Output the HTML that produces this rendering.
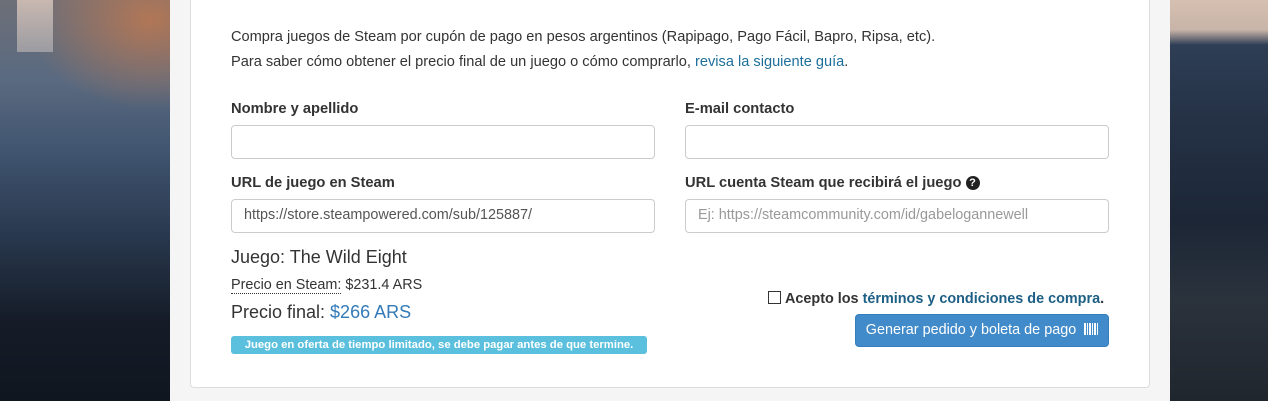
<!DOCTYPE html>
<html><head><meta charset="utf-8"><style>
*{box-sizing:border-box}
body{margin:0;width:1268px;height:401px;overflow:hidden;position:relative;font-family:"Liberation Sans",Arial,sans-serif;color:#333;background:#1a2230}
.bgl{position:absolute;left:0;top:0;width:170px;height:401px;background:
radial-gradient(ellipse 120px 90px at 150px 20px,rgba(190,120,80,.85),rgba(190,120,80,0)),
linear-gradient(180deg,#6d6f78 0px,#5a6a80 80px,#415570 150px,#2a3a50 230px,#151c28 320px,#10161f 401px)}
.bgl:before{content:"";position:absolute;left:17px;top:0;width:36px;height:52px;background:linear-gradient(180deg,#c8b8b0,#9c9ca2)}
.bgr{position:absolute;left:1170px;top:0;width:98px;height:401px;background:linear-gradient(180deg,#d5c0b0 0,#c8b4a8 30px,#2e3e55 45px,#253246 120px,#1c2636 220px,#2a323c 300px,#20262e 401px)}
.wrap{position:absolute;left:170px;top:0;width:1000px;height:401px;background:#f5f5f5}
.panel{position:absolute;left:20px;top:-10px;width:960px;height:398px;background:#fff;border:1px solid #ddd;border-radius:4px}
.p{position:absolute;font-size:14.6px;line-height:20px;white-space:nowrap}
label{position:absolute;font-weight:bold;font-size:14.7px;white-space:nowrap}
.in{position:absolute;height:34px;border:1px solid #ccc;border-radius:4px;background:#fff;font-size:14.4px;padding:7px 12px;color:#555;white-space:nowrap}
a{color:#1d5f85;text-decoration:none}
</style></head><body>
<div class="bgl"></div><div class="bgr"></div>
<div class="wrap"><div class="panel"></div></div>
<div class="p" style="left:231px;top:27px">Compra juegos de Steam por cupón de pago en pesos argentinos (Rapipago, Pago Fácil, Bapro, Ripsa, etc).</div>
<div class="p" style="left:231px;top:52px">Para saber cómo obtener el precio final de un juego o cómo comprarlo, <a style="color:#1d6f9a">revisa la siguiente guía</a>.</div>
<label style="left:231px;top:101px">Nombre y apellido</label>
<label style="left:685px;top:101px">E-mail contacto</label>
<div class="in" style="left:231px;top:125px;width:424px"></div>
<div class="in" style="left:685px;top:125px;width:424px"></div>
<label style="left:231px;top:175px">URL de juego en Steam</label>
<label style="left:685px;top:175px">URL cuenta Steam que recibirá el juego <span style="display:inline-block;width:14px;height:14px;border-radius:50%;background:#222;color:#fff;font-size:11px;line-height:14px;text-align:center;vertical-align:1px">?</span></label>
<div class="in" style="left:231px;top:199px;width:424px;color:#555">https://store.steampowered.com/sub/125887/</div>
<div class="in" style="left:685px;top:199px;width:424px;color:#999">Ej: https://steamcommunity.com/id/gabelogannewell</div>
<div class="p" style="left:231px;top:246px;font-size:18px;line-height:22px">Juego: The Wild Eight</div>
<div class="p" style="left:231px;top:275px;font-size:14.4px"><span style="border-bottom:1px dotted #333">Precio en Steam:</span> $231.4 ARS</div>
<div class="p" style="left:231px;top:301px;font-size:18px;line-height:22px">Precio final: <span style="color:#337ab7">$266 ARS</span></div>
<div style="position:absolute;left:231px;top:336px;width:416px;height:18px;background:#5bc0de;border-radius:3px;color:#fff;font-size:11.3px;font-weight:bold;line-height:18px;text-align:center;white-space:nowrap">Juego en oferta de tiempo limitado, se debe pagar antes de que termine.</div>
<div class="p" style="left:768px;top:289px;font-weight:bold;font-size:14.4px"><span style="display:inline-block;width:13px;height:13px;border:1px solid #333;vertical-align:-1px;margin-right:4px"></span>Acepto los <a>términos y condiciones de compra</a>.</div>
<div style="position:absolute;left:855px;top:314px;width:254px;height:33px;background:#428bca;border:1px solid #357ebd;border-radius:4px;color:#fff;font-size:14.4px;line-height:31px;text-align:center;white-space:nowrap">Generar pedido y boleta de pago&nbsp; <span style="display:inline-block;width:14px;height:12px;vertical-align:-1px;background:repeating-linear-gradient(90deg,#fff 0 2px,transparent 2px 3px,#fff 3px 4px,transparent 4px 5px)"></span></div>
</body></html>
